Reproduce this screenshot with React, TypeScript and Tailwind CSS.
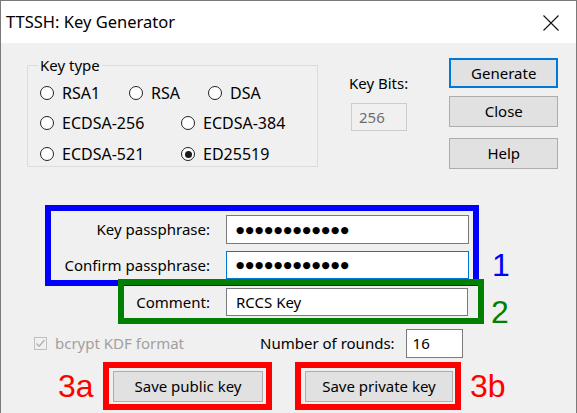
import React from "react";

function Radio({ label, checked = false, className = "" }: { label: string; checked?: boolean; className?: string }) {
  return (
    <div className={`flex items-center ${className}`}>
      <span className="w-[14px] h-[14px] min-w-[14px] rounded-full border border-[#222222] bg-white flex items-center justify-center">
        {checked && <span className="w-[7px] h-[7px] rounded-full bg-[#1a1a1a]" />}
      </span>
      <span className="ml-[8px] text-[16px] leading-none text-black">{label}</span>
    </div>
  );
}

function Btn({ label, def = false, className = "" }: { label: string; def?: boolean; className?: string }) {
  return (
    <div
      className={`flex items-center justify-center bg-[#e1e1e1] text-[15px] text-black ${
        def ? "border-2 border-[#0078d7]" : "border border-[#adadad]"
      } ${className}`}
    >
      {label}
    </div>
  );
}

const DOTS = "●●●●●●●●●●●●";

export default function App() {
  return (
    <div className="w-[577px] h-[413px] overflow-hidden bg-[#f0f0f0] border border-b-0 border-[#7a7a7a] flex flex-col font-['Noto_Sans',sans-serif] text-black">
      {/* title bar */}
      <div className="h-[42px] bg-white flex items-center justify-between pl-[5px] pr-[17px] shrink-0">
        <span className="text-[16.5px] leading-none">TTSSH: Key Generator</span>
        <svg width="16" height="16" viewBox="0 0 16 16" className="mt-[1px]">
          <path d="M0.5 0.5 L15.5 15.5 M15.5 0.5 L0.5 15.5" stroke="#111" strokeWidth="1.1" fill="none" />
        </svg>
      </div>

      {/* body */}
      <div className="flex flex-col">
        {/* top section */}
        <div className="flex mt-[15px] h-[112px]">
          <fieldset className="ml-[26px] w-[291px] h-[109px] border border-[#dcdcdc] px-[12px] flex flex-col">
            <legend className="ml-[-2px] px-[2px] text-[15px] leading-[14px]">Key type</legend>
            <div className="flex mt-[13px]">
              <Radio label="RSA1" className="w-[89px]" />
              <Radio label="RSA" className="w-[79px]" />
              <Radio label="DSA" />
            </div>
            <div className="flex mt-[14px]">
              <Radio label="ECDSA-256" className="w-[141px]" />
              <Radio label="ECDSA-384" />
            </div>
            <div className="flex mt-[15px]">
              <Radio label="ECDSA-521" className="w-[141px]" />
              <Radio label="ED25519" checked />
            </div>
          </fieldset>

          <div className="ml-[31px] flex flex-col">
            <span className="mt-[17px] text-[15px] leading-[16px]">Key Bits:</span>
            <div className="mt-[12px] ml-[2px] w-[56px] h-[28px] border border-[#cccccc] bg-[#f0f0f0] text-[15px] text-[#6d6d6d] flex items-center pl-[7px]">
              256
            </div>
          </div>

          <div className="ml-[41px] flex flex-col w-[109px]">
            <Btn label="Generate" def className="h-[30px]" />
            <Btn label="Close" className="h-[31px] mt-[8px]" />
            <Btn label="Help" className="h-[31px] mt-[11px]" />
          </div>
        </div>

        {/* passphrase (blue) */}
        <div className="flex items-end mt-[35px]">
          <div className="ml-[44px] w-[434px] h-[81px] border-[6px] border-[#0000ff] pt-[4px] flex flex-col">
            <div className="flex items-center h-[29px]">
              <span className="w-[159px] text-right text-[15px]">Key passphrase:</span>
              <div className="ml-[16px] w-[243px] h-[29px] bg-white border border-[#7a7a7a] flex items-center pl-[9px] font-['DejaVu_Sans',sans-serif] text-[9.5px] tracking-[1.2px] leading-none">
                {DOTS}
              </div>
            </div>
            <div className="flex items-center h-[28px] mt-[7px]">
              <span className="w-[159px] text-right text-[15px]">Confirm passphrase:</span>
              <div className="ml-[16px] w-[243px] h-[28px] bg-white border border-[#0078d7] flex items-center pl-[9px] font-['DejaVu_Sans',sans-serif] text-[9.5px] tracking-[1.2px] leading-none">
                {DOTS}
              </div>
            </div>
          </div>
          <span className="ml-[13px] mb-[5px] text-[32px] leading-none text-[#0000ff] font-['Liberation_Sans',sans-serif]">1</span>
        </div>

        {/* comment (green) */}
        <div className="flex items-end -mt-[7px]">
          <div className="ml-[117px] w-[366px] h-[45px] border-[6px] border-[#008000] pt-[3px] flex items-start">
            <span className="w-[86px] h-[28px] flex items-center justify-end text-[15px]">Comment:</span>
            <div className="ml-[16px] w-[242px] h-[28px] bg-white border border-[#7a7a7a] flex items-center pl-[9px] text-[15px]">
              RCCS Key
            </div>
          </div>
          <span className="ml-[7px] -mb-[4px] text-[32px] leading-none text-[#008000] font-['Liberation_Sans',sans-serif]">2</span>
        </div>

        {/* bcrypt row */}
        <div className="flex items-center mt-[5px] h-[29px]">
          <span className="ml-[33px] w-[13px] h-[13px] border border-[#c0c0c0] flex items-center justify-center">
            <svg width="11" height="11" viewBox="0 0 11 11">
              <path d="M1.5 5.5 L4.2 8.2 L9.5 2" stroke="#b0b0b0" strokeWidth="1.3" fill="none" />
            </svg>
          </span>
          <span className="ml-[8px] text-[15px] text-[#a0a0a0]">bcrypt KDF format</span>
          <span className="ml-[76px] text-[15px]">Number of rounds:</span>
          <div className="ml-[11px] w-[57px] h-[29px] bg-white border border-[#7a7a7a] flex items-center pl-[6px] text-[15px]">
            16
          </div>
        </div>

        {/* save buttons (red) */}
        <div className="flex items-center mt-[4px]">
          <span className="ml-[57px] w-[45px] text-[32px] leading-none text-[#ff0000] font-['Liberation_Sans',sans-serif]">3a</span>
          <div className="w-[169px] h-[48px] border-[6px] border-[#ff0000] pl-[4px] pt-[3px]">
            <Btn label="Save public key" className="w-[150px] h-[31px]" />
          </div>
          <div className="ml-[23px] w-[166px] h-[48px] border-[6px] border-[#ff0000] pl-[4px] pt-[3px]">
            <Btn label="Save private key" className="w-[148px] h-[31px]" />
          </div>
          <span className="ml-[9px] text-[32px] leading-none text-[#ff0000] font-['Liberation_Sans',sans-serif]">3b</span>
        </div>
      </div>
    </div>
  );
}
